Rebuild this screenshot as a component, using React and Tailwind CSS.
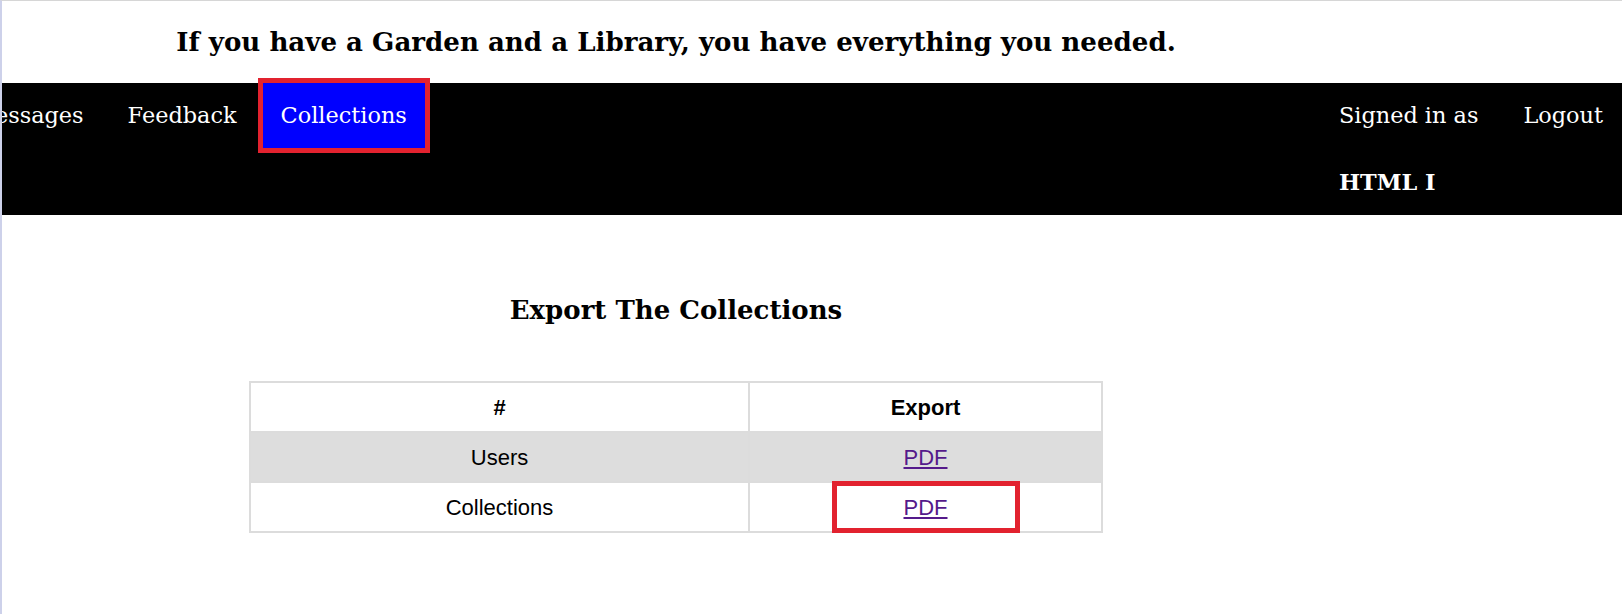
export default function App() {
  const serif = { fontFamily: '"DejaVu Serif", serif' };
  return (
    <div className="min-h-screen bg-white border-t border-t-[#d6d6d6] border-l-2 border-l-[#cdd1ea]">
      <div className="w-[1348px] h-[82px] flex items-center justify-center">
        <h2 className="text-[26.1px] font-bold text-black leading-[32px] whitespace-nowrap" style={serif}>
          If you have a Garden and a Library, you have everything you needed.
        </h2>
      </div>

      <nav className="bg-black h-[132px] flex justify-between overflow-x-clip whitespace-nowrap" style={serif}>
        <div className="flex items-start gap-[8px] -ml-[48px]">
          <a className="h-[65px] px-[18px] flex items-center text-[22.4px] text-white">Messages</a>
          <a className="h-[65px] px-[18px] flex items-center text-[22.4px] text-white">Feedback</a>
          <a className="h-[65px] px-[18px] flex items-center text-[22.4px] text-white bg-[#0000ff] outline-5 outline-solid outline-[#e2222f]">
            Collections
          </a>
        </div>
        <div className="flex flex-col shrink-0 mr-[1px]">
          <div className="flex gap-[9px]">
            <a className="h-[65px] px-[18px] flex items-center text-[22.4px] text-white">Signed in as</a>
            <a className="h-[65px] px-[18px] flex items-center text-[22.4px] text-white">Logout</a>
          </div>
          <div className="h-[67px] pt-[2px] px-[18px] flex items-center text-[22.4px] text-white font-bold">HTML I</div>
        </div>
      </nav>

      <div className="w-[1348px] flex flex-col items-center">
        <h3 className="mt-[79px] text-[26px] leading-[32px] font-bold text-black" style={serif}>
          Export The Collections
        </h3>
        <table
          className="mt-[55px] w-[854px] border-collapse border-2 border-[#dcdcdc] text-[22px] text-black"
          style={{ fontFamily: '"Liberation Sans", Arial, sans-serif' }}
        >
          <thead>
            <tr className="h-[50px]">
              <th className="w-[499px] border-2 border-[#dcdcdc] font-bold">#</th>
              <th className="border-2 border-[#dcdcdc] font-bold">Export</th>
            </tr>
          </thead>
          <tbody>
            <tr className="h-[50px] bg-[#dddddd]">
              <td className="border-2 border-[#dcdcdc] text-center">Users</td>
              <td className="border-2 border-[#dcdcdc] text-center">
                <a className="text-[#551a8b] underline">PDF</a>
              </td>
            </tr>
            <tr className="h-[50px]">
              <td className="border-2 border-[#dcdcdc] text-center">Collections</td>
              <td className="relative border-2 border-[#dcdcdc] text-center">
                <a className="text-[#551a8b] underline">PDF</a>
                <div className="absolute left-[82px] top-[-2px] w-[188px] h-[52px] border-[5px] border-[#e2222f]"></div>
              </td>
            </tr>
          </tbody>
        </table>
      </div>
    </div>
  );
}
